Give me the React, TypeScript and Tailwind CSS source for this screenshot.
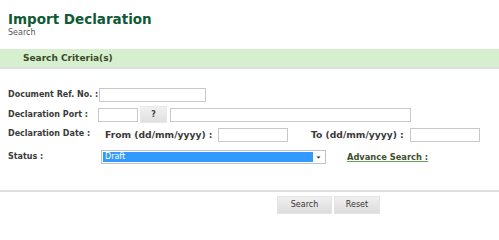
import React from "react";

export default function App() {
  const input = "h-[14px] border border-[#c8c8c8] bg-white";
  return (
    <div className="w-[499px] h-[221px] bg-white font-['DejaVu_Sans',sans-serif] text-[#333] overflow-hidden">
      <div className="pl-2 pt-[11px]">
        <div className="text-[13.5px] leading-[16px] font-bold text-[#0f5a34]">Import Declaration</div>
        <div className="mt-[1px] text-[8px] leading-[10px] text-[#555]">Search</div>
      </div>
      <div className="mt-[11px] h-[20px] bg-[#d6efcf] border-b-2 border-[#dedede] pl-[23px]">
        <span className="text-[9px] leading-[18px] font-bold text-[#3a4a26] block">Search Criteria(s)</span>
      </div>
      <div className="pl-2 pt-[19px] text-[8px] font-bold text-[#3a3a3a]">
        <div className="flex items-center h-[14px]">
          <div className="w-[91px] whitespace-nowrap">Document Ref. No. :</div>
          <div className={`${input} w-[107px]`} />
        </div>
        <div className="flex items-center h-[17px] mt-[4px]">
          <div className="w-[90px] whitespace-nowrap">Declaration Port :</div>
          <div className={`${input} w-[40px]`} />
          <div className="ml-[2px] w-[27px] h-[17px] bg-gradient-to-b from-[#f0f0f0] to-[#e0e0e0] border border-[#e8e8e8] flex items-center justify-center text-[8px] text-[#444]">?</div>
          <div className={`${input} ml-[3px] w-[241px]`} />
        </div>
        <div className="flex items-center h-[14px] mt-[5px]">
          <div className="w-[97px] whitespace-nowrap -mt-[2px]">Declaration Date :</div>
          <div className="w-[113px] whitespace-nowrap text-[9.2px] text-[#3a3a3a]">From (dd/mm/yyyy) :</div>
          <div className={`${input} w-[70px]`} />
          <div className="ml-[23px] w-[99px] whitespace-nowrap text-[9.2px]">To (dd/mm/yyyy) :</div>
          <div className={`${input} w-[70px]`} />
        </div>
        <div className="flex items-center h-[14px] mt-[8px]">
          <div className="w-[93px] whitespace-nowrap -mt-[1px]">Status :</div>
          <div className="w-[225px] h-[14px] border border-[#b9c4d0] bg-white flex items-center pl-[1px] pr-[2px]">
            <div className="flex-1 h-[10px] bg-[#3399ff] text-white font-normal text-[8px] leading-[10px] pl-[2px]">Draft</div>
            <svg width="9" height="10" viewBox="0 0 9 10" className="ml-[1px]">
              <path d="M2.5 4.5 L6.5 4.5 L4.5 6.5 Z" fill="#222" />
            </svg>
          </div>
          <div className="ml-[21px] underline decoration-[#6a9a5a] text-[8.3px] text-[#3f4d2e] whitespace-nowrap">Advance Search :</div>
        </div>
      </div>
      <div className="mt-[26px] h-[2px] bg-[#dedede]" />
      <div className="flex pl-[277px] mt-[4px] gap-[2px] text-[8px] text-[#333]">
        <div className="w-[55px] h-[18px] bg-gradient-to-b from-[#f0f0f0] to-[#dcdcdc] border border-[#e4e4e4] flex items-center justify-center">Search</div>
        <div className="w-[46px] h-[18px] bg-gradient-to-b from-[#f0f0f0] to-[#dcdcdc] border border-[#e4e4e4] flex items-center justify-center">Reset</div>
      </div>
    </div>
  );
}
